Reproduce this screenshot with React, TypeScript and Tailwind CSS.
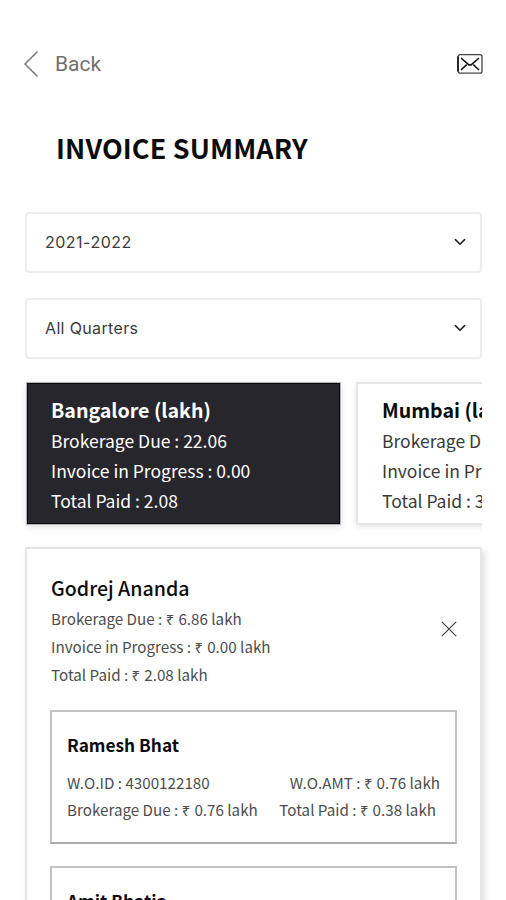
import React from 'react';

const source = "font-['Noto_Sans_CJK_SC','Noto_Sans',sans-serif]";

function Line({ className, children }: { className: string; children: React.ReactNode }) {
  return (
    <div className="flex">
      <span className={'whitespace-nowrap ' + className}>{children}</span>
    </div>
  );
}

function Select({ children, text }: { children: string; text: string }) {
  return (
    <button className="flex h-[61px] w-full items-center justify-between rounded-[4px] border-2 border-[#ededed] bg-white pb-[2px] pl-[18px] pr-[14px]">
      <span className={"whitespace-nowrap font-['Inter',sans-serif] text-[#3a3a3a] " + text}>{children}</span>
      <svg width="12" height="8" viewBox="0 0 12 8" fill="none" stroke="#222" strokeWidth="1.6" strokeLinecap="round" strokeLinejoin="round">
        <path d="M1.4 1.6 6 6.2 10.6 1.6" />
      </svg>
    </button>
  );
}

function Rupee() {
  return <span className="mr-[0.7px] font-['Noto_Sans',sans-serif] text-[15px] leading-none">₹</span>;
}

export default function App() {
  return (
    <div className={'flex h-[900px] w-[506px] flex-col overflow-hidden bg-white text-[#0c0c0c] ' + source}>
      <header className="mt-[50px] flex h-7 shrink-0 items-center justify-between pl-[24px] pr-[23px]">
        <div className="flex items-center">
          <svg width="15" height="28" viewBox="0 0 15 28" fill="none" stroke="#777" strokeWidth="1.5">
            <path d="M13.5 1.5 1 14 13.5 26.5" />
          </svg>
          <span className="ml-[16px] font-['Roboto',sans-serif] text-[21px] leading-[28px] text-[#707070]">Back</span>
        </div>
        <svg width="26" height="20" viewBox="0 0 26 20" fill="none" stroke="#111">
          <rect x="1" y="0.7" width="24" height="18.4" rx="2.2" strokeWidth="1.3" stroke="#444" />
          <path d="M1 2.5V17.5" strokeWidth="1.6" />
          <path d="M4 4 11 10.1Q13 12 15 10.1L22 4M4 16 9.7 10.6M22 16 16.3 10.6" strokeWidth="1.5" />
        </svg>
      </header>

      <h1 className="ml-[56px] mt-[50px] flex h-10 shrink-0 items-center">
        <span className="whitespace-nowrap text-[27px] font-bold leading-10 tracking-[0.13px]">INVOICE SUMMARY</span>
      </h1>

      <main className="flex flex-col pl-[25px] pr-[24px] pt-[44px]">
        <div className="flex flex-col gap-[25px]">
          <Select text="text-[16px] tracking-[0.5px]">2021-2022</Select>
          <Select text="text-[16px] tracking-[0.35px]">All Quarters</Select>
        </div>

        <div className="-ml-[5px] mt-[16px] flex gap-[15px] overflow-hidden pb-[12px] pl-[6px] pt-[7px]">
          <section className="flex h-[143px] w-[315px] shrink-0 flex-col border border-[#b5b5b5] bg-[#27262d] pl-[24px] pt-[11px] text-white shadow-[0_2px_6px_rgba(0,0,0,0.12),inset_0_0_0_1px_#08080e]">
            <Line className="text-[19.6px] font-bold leading-[32px]">Bangalore (lakh)</Line>
            <Line className="text-[17.5px] leading-[30px]">Brokerage Due : 22.06</Line>
            <Line className="text-[17.5px] leading-[30px]">Invoice in Progress : 0.00</Line>
            <Line className="text-[17.5px] leading-[30px]">Total Paid : 2.08</Line>
          </section>
          <section className="flex h-[143px] w-[315px] shrink-0 flex-col border-2 border-[#e6e6e6] bg-white pl-[24px] pt-[10px] shadow-[0_2px_6px_rgba(0,0,0,0.1)]">
            <Line className="text-[19.6px] font-bold leading-[32px]">Mumbai (lakh)</Line>
            <Line className="text-[17.5px] leading-[30px] text-[#3a3a3a]">Brokerage Due : 18.40</Line>
            <Line className="text-[17.5px] leading-[30px] text-[#3a3a3a]">Invoice in Progress : 0.00</Line>
            <Line className="text-[17.5px] leading-[30px] text-[#3a3a3a]">Total Paid : 3.20</Line>
          </section>
        </div>

        <section className="mt-[10px] flex h-[420px] shrink-0 flex-col rounded-[2px] border-2 border-[#e5e5e5] bg-white px-[23px] pt-[23px] shadow-[3px_3px_6px_rgba(0,0,0,0.12)]">
          <div className="flex items-center justify-between">
            <div className="pl-px">
              <Line className="text-[19.6px] font-medium leading-[32px]">Godrej Ananda</Line>
              <Line className="text-[15.2px] leading-[28px] text-[#4d4d4d]">Brokerage Due : <Rupee /> 6.86 lakh</Line>
              <Line className="text-[15.2px] leading-[28px] text-[#4d4d4d]">Invoice in Progress : <Rupee /> 0.00 lakh</Line>
              <Line className="text-[15.2px] leading-[28px] text-[#4d4d4d]">Total Paid : <Rupee /> 2.08 lakh</Line>
            </div>
            <svg className="mb-[3px]" width="16" height="16" viewBox="0 0 16 16" fill="none" stroke="#444" strokeWidth="1.2">
              <path d="M0.8 0.8 15.2 15.2M15.2 0.8 0.8 15.2" />
            </svg>
          </div>
          <article className="mt-[22px] flex h-[134px] shrink-0 flex-col border-2 border-[#c2c2c2] border-b-[#acacac] px-[15px] pt-[19px]">
            <Line className="text-[17.3px] font-bold leading-[28px]">Ramesh Bhat</Line>
            <div className="mt-[10px] flex justify-between text-[#4d4d4d]">
              <Line className="text-[15.2px] leading-[27px]">W.O.ID : 4300122180</Line>
              <Line className="text-[15.2px] leading-[27px]">W.O.AMT : <Rupee /> 0.76 lakh</Line>
            </div>
            <div className="flex justify-between pr-[4px] text-[#4d4d4d]">
              <Line className="text-[15.2px] leading-[27px]">Brokerage Due : <Rupee /> 0.76 lakh</Line>
              <Line className="text-[15.2px] leading-[27px]">Total Paid : <Rupee /> 0.38 lakh</Line>
            </div>
          </article>
          <article className="mt-[22px] flex h-[134px] shrink-0 flex-col border-2 border-[#c2c2c2] px-[15px] pt-[19px]">
            <Line className="text-[17.3px] font-bold leading-[28px]">Amit Bhatia</Line>
          </article>
        </section>
      </main>
    </div>
  );
}
